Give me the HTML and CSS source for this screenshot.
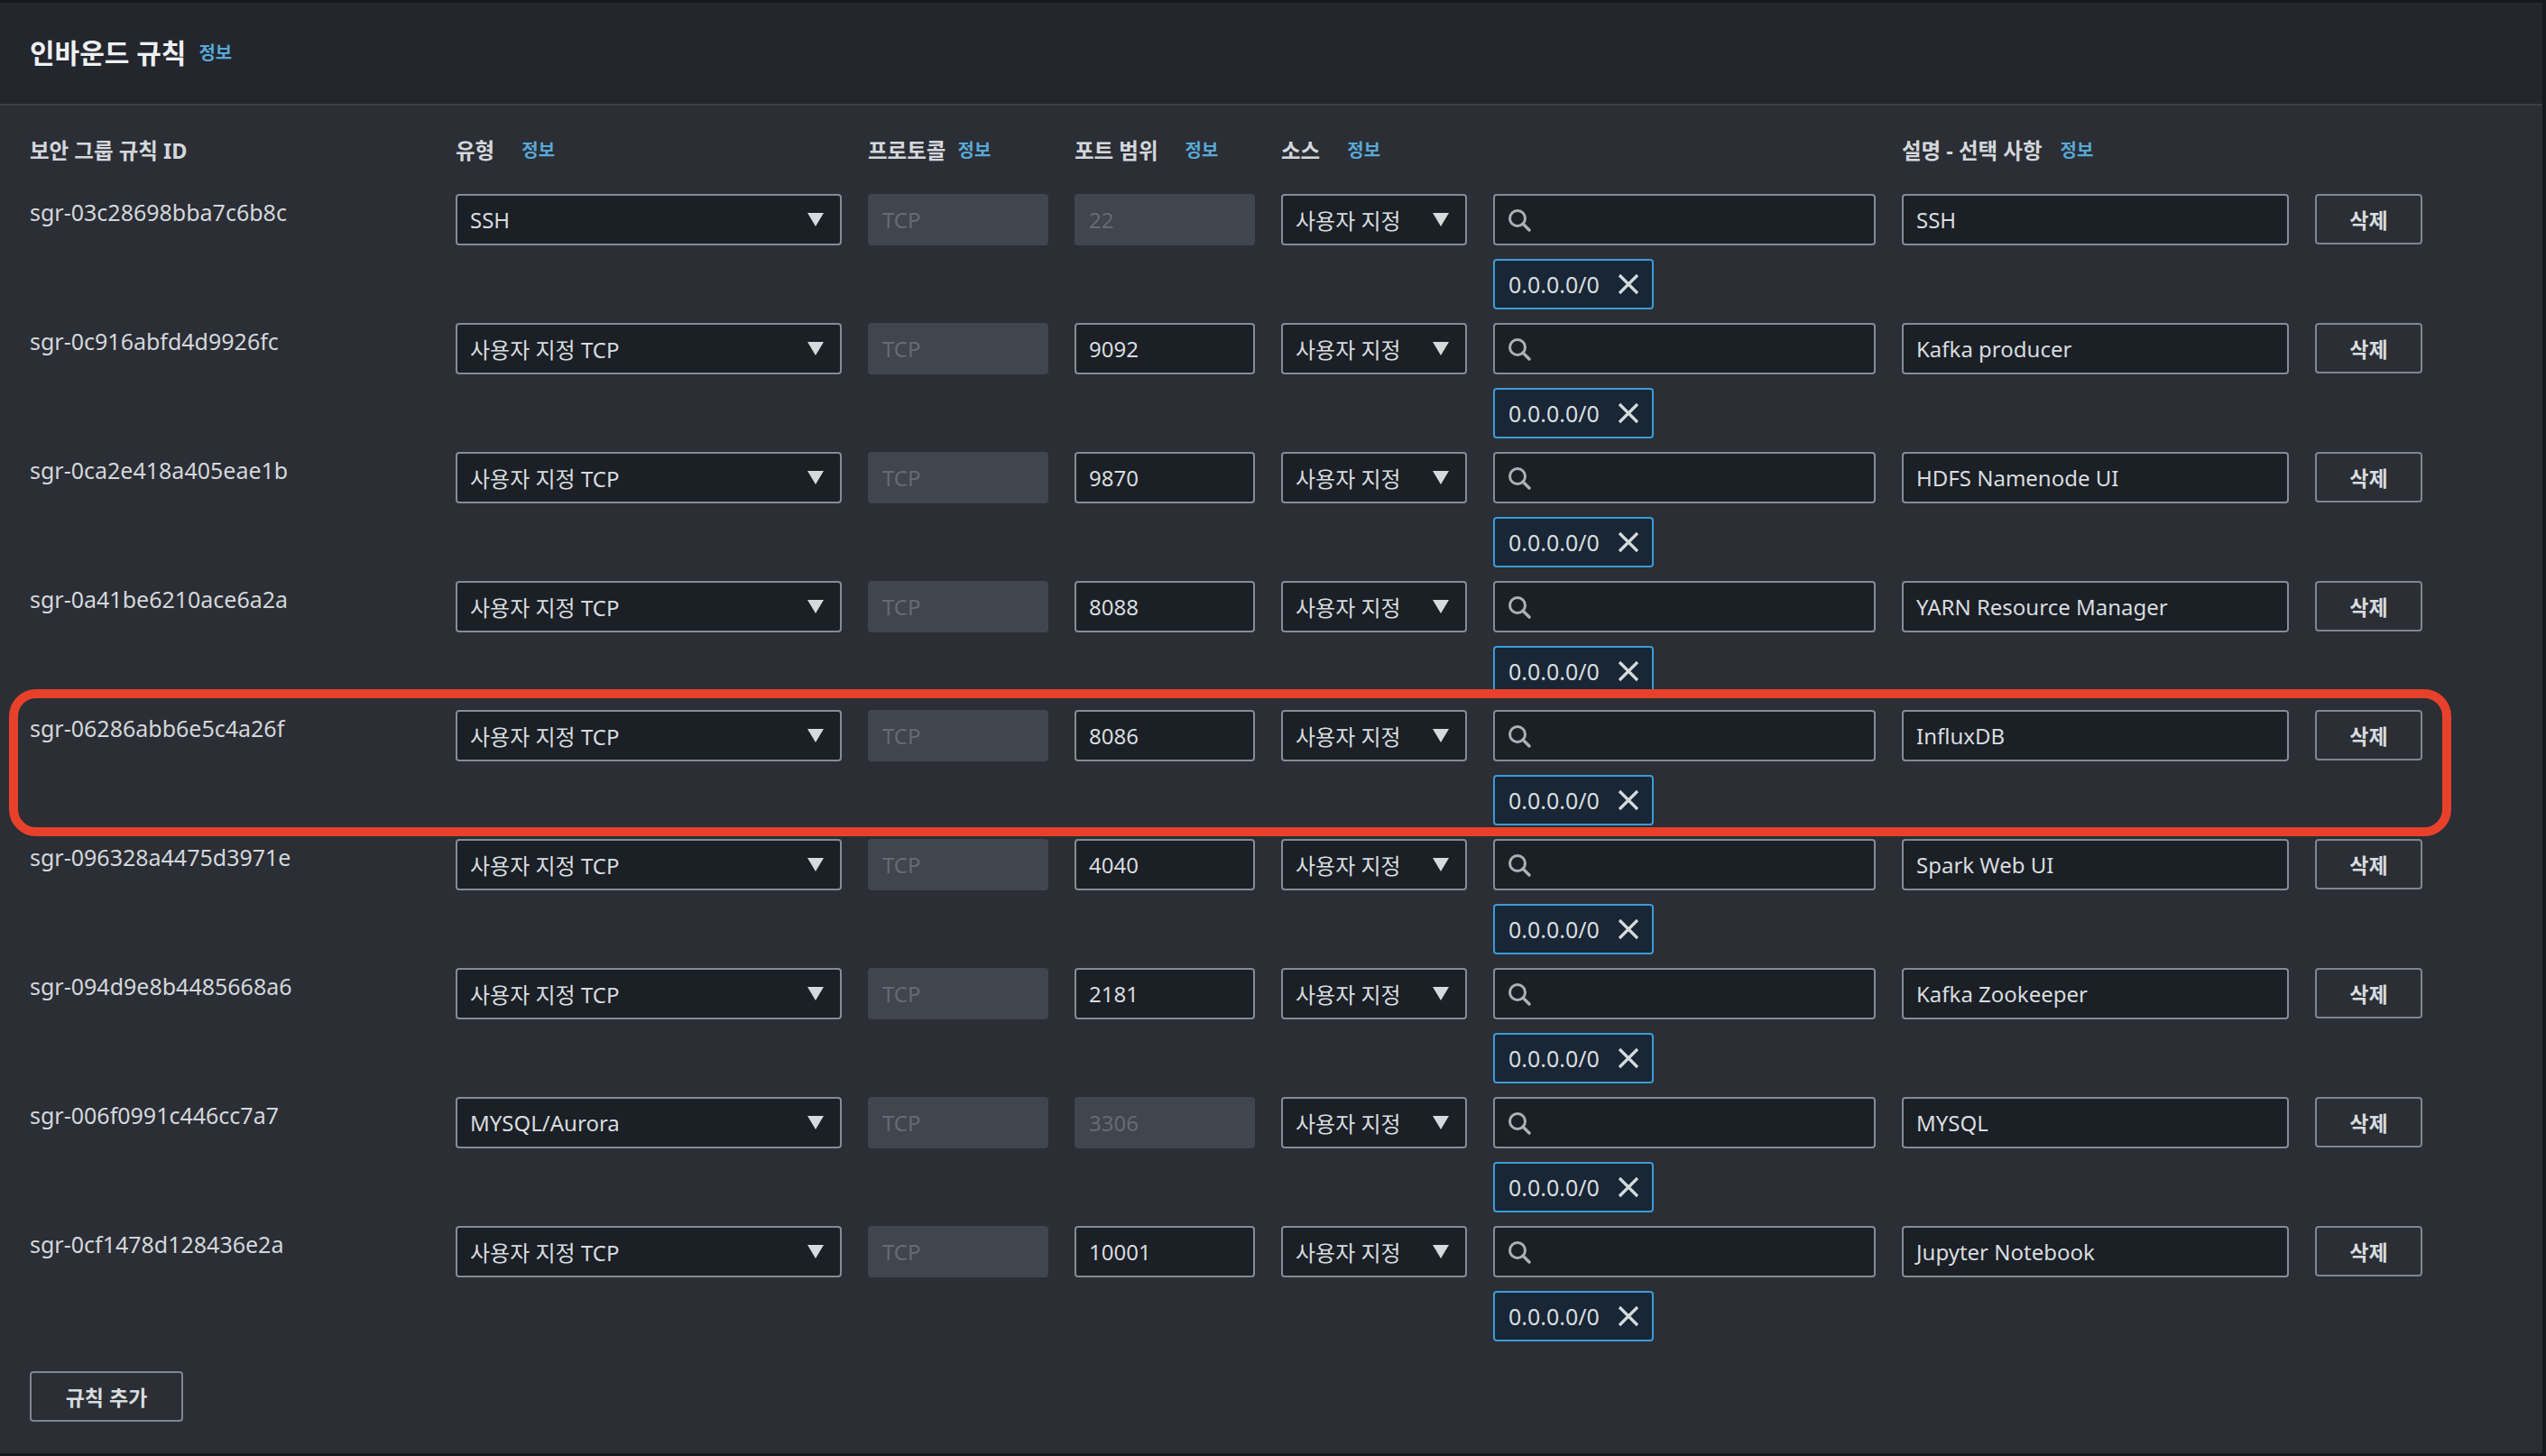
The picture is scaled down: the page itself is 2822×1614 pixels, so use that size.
FILE: index.html
```html
<!DOCTYPE html>
<html lang="ko">
<head>
<meta charset="utf-8">
<title>인바운드 규칙</title>
<link rel="stylesheet" href="styles.css">
</head>
<body>
<svg width="0" height="0" class="defs" aria-hidden="true">
  <defs>
    <symbol id="caret" viewBox="0 0 18 15"><polygon points="0,0 18,0 9,15" fill="currentColor"/></symbol>
    <symbol id="search" viewBox="0 0 26 26"><circle cx="11" cy="11" r="8.5" fill="none" stroke="currentColor" stroke-width="3"/><line x1="17" y1="17" x2="24" y2="24" stroke="currentColor" stroke-width="3.4" stroke-linecap="round"/></symbol>
    <symbol id="close" viewBox="0 0 24 24"><path d="M2 2 L22 22 M22 2 L2 22" stroke="currentColor" stroke-width="3.2" fill="none"/></symbol>
  </defs>
</svg>
<div class="panel">
  <header class="panel-head">
    <h2 class="title">인바운드 규칙</h2>
    <a class="info">정보</a>
  </header>
  <div class="panel-body">
    <div class="cols">
      <div class="col-label">보안 그룹 규칙 ID</div>
      <div class="col-label">유형<a class="info wide">정보</a></div>
      <div class="col-label">프로토콜<a class="info">정보</a></div>
      <div class="col-label">포트 범위<a class="info wide">정보</a></div>
      <div class="col-label">소스<a class="info wide">정보</a></div>
      <div class="col-label"></div>
      <div class="col-label">설명 - 선택 사항<a class="info mid">정보</a></div>
      <div class="col-label"></div>
    </div>

    <div class="rules">
      <div class="rule">
        <div class="rule-id">sgr-03c28698bba7c6b8c</div>
        <div class="field select"><span>SSH</span><svg class="caret"><use href="#caret"/></svg></div>
        <div class="field disabled">TCP</div>
        <div class="field disabled">22</div>
        <div class="field select"><span>사용자 지정</span><svg class="caret"><use href="#caret"/></svg></div>
        <div class="field search"><svg class="search-ico"><use href="#search"/></svg></div>
        <div class="field">SSH</div>
        <div class="btn del">삭제</div>
        <div class="chip"><span>0.0.0.0/0</span><svg class="x-ico"><use href="#close"/></svg></div>
      </div>

      <div class="rule">
        <div class="rule-id">sgr-0c916abfd4d9926fc</div>
        <div class="field select"><span>사용자 지정 TCP</span><svg class="caret"><use href="#caret"/></svg></div>
        <div class="field disabled">TCP</div>
        <div class="field">9092</div>
        <div class="field select"><span>사용자 지정</span><svg class="caret"><use href="#caret"/></svg></div>
        <div class="field search"><svg class="search-ico"><use href="#search"/></svg></div>
        <div class="field">Kafka producer</div>
        <div class="btn del">삭제</div>
        <div class="chip"><span>0.0.0.0/0</span><svg class="x-ico"><use href="#close"/></svg></div>
      </div>

      <div class="rule">
        <div class="rule-id">sgr-0ca2e418a405eae1b</div>
        <div class="field select"><span>사용자 지정 TCP</span><svg class="caret"><use href="#caret"/></svg></div>
        <div class="field disabled">TCP</div>
        <div class="field">9870</div>
        <div class="field select"><span>사용자 지정</span><svg class="caret"><use href="#caret"/></svg></div>
        <div class="field search"><svg class="search-ico"><use href="#search"/></svg></div>
        <div class="field">HDFS Namenode UI</div>
        <div class="btn del">삭제</div>
        <div class="chip"><span>0.0.0.0/0</span><svg class="x-ico"><use href="#close"/></svg></div>
      </div>

      <div class="rule">
        <div class="rule-id">sgr-0a41be6210ace6a2a</div>
        <div class="field select"><span>사용자 지정 TCP</span><svg class="caret"><use href="#caret"/></svg></div>
        <div class="field disabled">TCP</div>
        <div class="field">8088</div>
        <div class="field select"><span>사용자 지정</span><svg class="caret"><use href="#caret"/></svg></div>
        <div class="field search"><svg class="search-ico"><use href="#search"/></svg></div>
        <div class="field">YARN Resource Manager</div>
        <div class="btn del">삭제</div>
        <div class="chip"><span>0.0.0.0/0</span><svg class="x-ico"><use href="#close"/></svg></div>
      </div>

      <div class="rule">
        <div class="rule-id">sgr-06286abb6e5c4a26f</div>
        <div class="field select"><span>사용자 지정 TCP</span><svg class="caret"><use href="#caret"/></svg></div>
        <div class="field disabled">TCP</div>
        <div class="field">8086</div>
        <div class="field select"><span>사용자 지정</span><svg class="caret"><use href="#caret"/></svg></div>
        <div class="field search"><svg class="search-ico"><use href="#search"/></svg></div>
        <div class="field">InfluxDB</div>
        <div class="btn del">삭제</div>
        <div class="chip"><span>0.0.0.0/0</span><svg class="x-ico"><use href="#close"/></svg></div>
        <div class="highlight"></div>
      </div>

      <div class="rule">
        <div class="rule-id">sgr-096328a4475d3971e</div>
        <div class="field select"><span>사용자 지정 TCP</span><svg class="caret"><use href="#caret"/></svg></div>
        <div class="field disabled">TCP</div>
        <div class="field">4040</div>
        <div class="field select"><span>사용자 지정</span><svg class="caret"><use href="#caret"/></svg></div>
        <div class="field search"><svg class="search-ico"><use href="#search"/></svg></div>
        <div class="field">Spark Web UI</div>
        <div class="btn del">삭제</div>
        <div class="chip"><span>0.0.0.0/0</span><svg class="x-ico"><use href="#close"/></svg></div>
      </div>

      <div class="rule">
        <div class="rule-id">sgr-094d9e8b4485668a6</div>
        <div class="field select"><span>사용자 지정 TCP</span><svg class="caret"><use href="#caret"/></svg></div>
        <div class="field disabled">TCP</div>
        <div class="field">2181</div>
        <div class="field select"><span>사용자 지정</span><svg class="caret"><use href="#caret"/></svg></div>
        <div class="field search"><svg class="search-ico"><use href="#search"/></svg></div>
        <div class="field">Kafka Zookeeper</div>
        <div class="btn del">삭제</div>
        <div class="chip"><span>0.0.0.0/0</span><svg class="x-ico"><use href="#close"/></svg></div>
      </div>

      <div class="rule">
        <div class="rule-id">sgr-006f0991c446cc7a7</div>
        <div class="field select"><span>MYSQL/Aurora</span><svg class="caret"><use href="#caret"/></svg></div>
        <div class="field disabled">TCP</div>
        <div class="field disabled">3306</div>
        <div class="field select"><span>사용자 지정</span><svg class="caret"><use href="#caret"/></svg></div>
        <div class="field search"><svg class="search-ico"><use href="#search"/></svg></div>
        <div class="field">MYSQL</div>
        <div class="btn del">삭제</div>
        <div class="chip"><span>0.0.0.0/0</span><svg class="x-ico"><use href="#close"/></svg></div>
      </div>

      <div class="rule">
        <div class="rule-id">sgr-0cf1478d128436e2a</div>
        <div class="field select"><span>사용자 지정 TCP</span><svg class="caret"><use href="#caret"/></svg></div>
        <div class="field disabled">TCP</div>
        <div class="field">10001</div>
        <div class="field select"><span>사용자 지정</span><svg class="caret"><use href="#caret"/></svg></div>
        <div class="field search"><svg class="search-ico"><use href="#search"/></svg></div>
        <div class="field">Jupyter Notebook</div>
        <div class="btn del">삭제</div>
        <div class="chip"><span>0.0.0.0/0</span><svg class="x-ico"><use href="#close"/></svg></div>
      </div>
    </div>

    <div class="btn add">규칙 추가</div>
  </div>
</div>
</body>
</html>
```
FILE: styles.css
```css
* { box-sizing: border-box; }
html, body { margin: 0; padding: 0; }
body {
  background: #16181d;
  font-family: "Noto Sans", "Noto Sans CJK KR", sans-serif;
  color: #d5d9dd;
  width: 2822px;
  height: 1614px;
  overflow: hidden;
  padding-top: 3px;
}
.defs { position: absolute; width: 0; height: 0; }

.panel {
  width: 2818px;
  height: 1608px;
  background: #2b2e34;
}
.panel-head {
  height: 114px;
  background: #23262d;
  border-bottom: 2px solid #3b3e45;
  display: flex;
  align-items: center;
  gap: 14px;
  padding-left: 33px;
}
.title {
  margin: 0;
  font-size: 30px;
  font-weight: 700;
  line-height: 1;
  color: #eef0f2;
}
.info {
  color: #58a9d6;
  font-size: 20px;
  font-weight: 700;
  line-height: 1;
}

.panel-body { padding: 35px 0 35px 33px; }

.cols, .rule {
  display: grid;
  width: max-content;
  grid-template-columns: 443px 428px 200px 200px 206px 424px 429px 119px;
  column-gap: 29px;
}
.cols { height: 30px; align-items: center; margin-bottom: 33px; }
.col-label {
  display: flex;
  align-items: center;
  font-size: 23.5px;
  font-weight: 700;
  line-height: 30px;
  color: #d3d7dc;
  white-space: nowrap;
}
.col-label .info { margin-left: 13px; }
.col-label .info.wide { margin-left: 30px; }
.col-label .info.mid { margin-left: 20px; }

.rules { display: flex; flex-direction: column; gap: 15px; }
.rule {
  position: relative;
  grid-template-rows: 57px 56px;
  row-gap: 15px;
}
.rule-id {
  font-size: 25px;
  line-height: 30px;
  padding-top: 5px;
  color: #d3d7dc;
}

.field {
  height: 57px;
  display: flex;
  align-items: center;
  padding: 0 14px;
  border: 2px solid #858c93;
  border-radius: 4px;
  background: #1b1f26;
  font-size: 24px;
  color: #d8dcdf;
  white-space: nowrap;
}
.field.disabled {
  background: #41454e;
  border-color: #41454e;
  color: #656b74;
}
.select { justify-content: space-between; padding-right: 18px; }
.caret { width: 18px; height: 15px; color: #d5dbdb; flex: none; }
.search-ico { width: 26px; height: 26px; color: #aab2b7; flex: none; }

.chip {
  grid-column: 6;
  grid-row: 2;
  width: 178px;
  height: 56px;
  display: flex;
  align-items: center;
  justify-content: space-between;
  padding: 0 14px 0 15px;
  border: 2px solid #3b9bd6;
  border-radius: 4px;
  background: #182636;
  font-size: 25px;
  color: #d8dcdf;
}
.x-ico { width: 24px; height: 24px; color: #d5dbdb; flex: none; }

.btn {
  height: 56px;
  display: flex;
  align-items: center;
  justify-content: center;
  border: 2px solid #7f868e;
  border-radius: 4px;
  font-size: 23px;
  font-weight: 700;
  color: #d8dcdf;
}
.del { grid-column: 8; grid-row: 1; }
.add { width: 170px; margin-top: 33px; }

.highlight {
  position: absolute;
  left: -23px;
  top: -23px;
  right: -32px;
  bottom: -12px;
  border: 10px solid #e8412b;
  border-radius: 30px;
  pointer-events: none;
}
```
